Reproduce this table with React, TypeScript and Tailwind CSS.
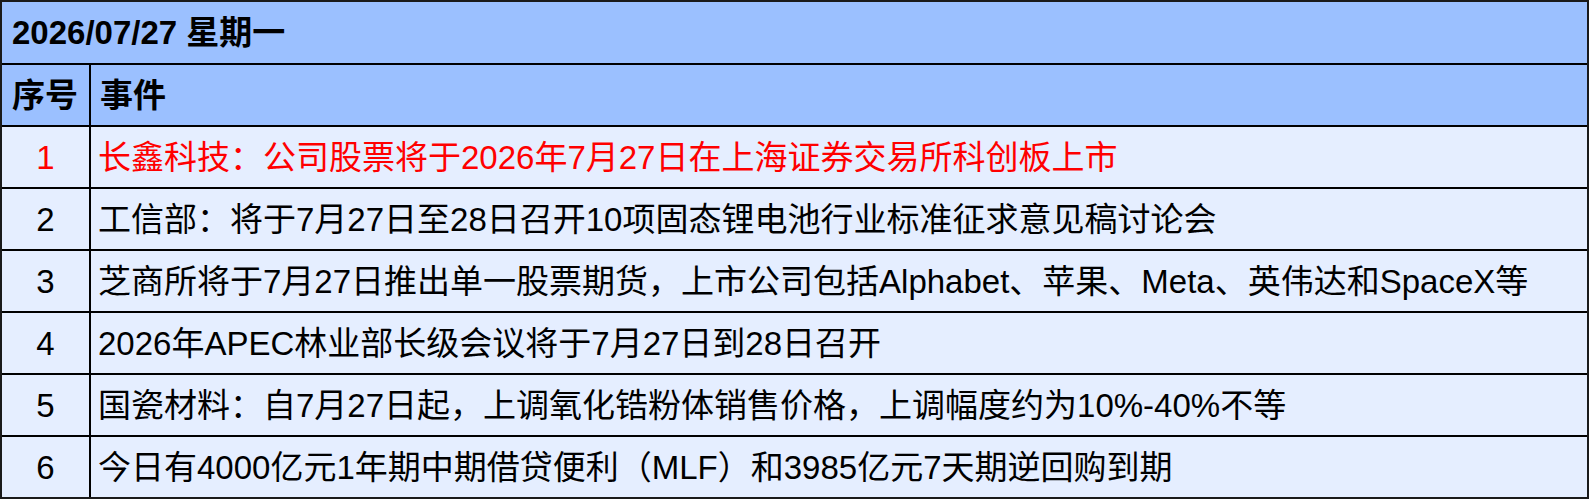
const rows = [
  { no: 1, text: "长鑫科技：公司股票将于2026年7月27日在上海证券交易所科创板上市", red: true },
  { no: 2, text: "工信部：将于7月27日至28日召开10项固态锂电池行业标准征求意见稿讨论会" },
  { no: 3, text: "芝商所将于7月27日推出单一股票期货，上市公司包括Alphabet、苹果、Meta、英伟达和SpaceX等" },
  { no: 4, text: "2026年APEC林业部长级会议将于7月27日到28日召开" },
  { no: 5, text: "国瓷材料：自7月27日起，上调氧化锆粉体销售价格，上调幅度约为10%-40%不等" },
  { no: 6, text: "今日有4000亿元1年期中期借贷便利（MLF）和3985亿元7天期逆回购到期" },
];

export default function App() {
  return (
    <div className="bg-white w-[1591px] h-[499px] font-['Liberation_Sans','Noto_Sans_CJK_SC',sans-serif] text-[33px] leading-none text-black">
      <div className="w-[1589px] border-2 border-[#1a1a1a] flex flex-col">
        <div className="h-[63px] bg-[#9bc0ff] border-b-2 border-black flex items-center pl-[10px] font-bold">
          2026/07/27 星期一
        </div>
        <div className="h-[62px] bg-[#9bc0ff] border-b-2 border-black flex font-bold">
          <div className="w-[89px] border-r-2 border-black flex items-center pl-[10px]">序号</div>
          <div className="flex-1 flex items-center pl-[9px]">事件</div>
        </div>
        {rows.map((r, i) => (
          <div
            key={r.no}
            className={`bg-[#e5eeff] flex ${i < rows.length - 1 ? "h-[62px] border-b-2 border-black" : "h-[60px]"} ${r.red ? "text-[#ff0000]" : ""}`}
          >
            <div className="w-[89px] border-r-2 border-black flex items-center justify-center">{r.no}</div>
            <div className="flex-1 flex items-center pl-[7px] whitespace-nowrap">{r.text}</div>
          </div>
        ))}
      </div>
    </div>
  );
}
